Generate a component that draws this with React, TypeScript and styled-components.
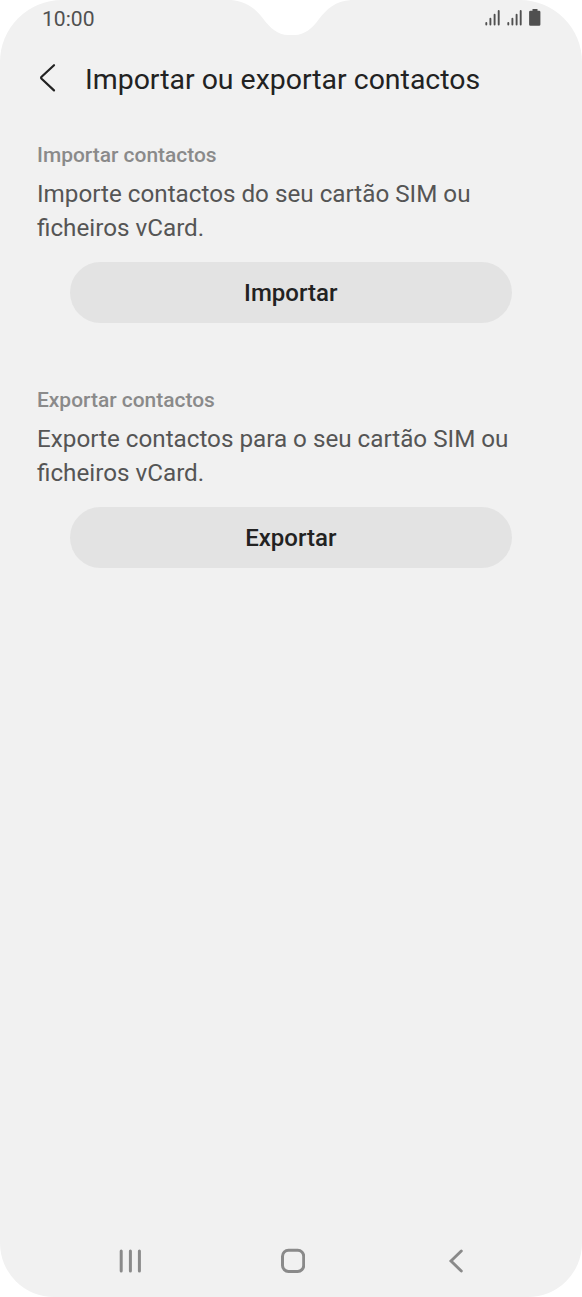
import React from "react";
import styled, { createGlobalStyle } from "styled-components";

const GlobalStyle = createGlobalStyle`
  * { box-sizing: border-box; }
  body { margin: 0; background: #fff; font-family: Roboto, "Liberation Sans", sans-serif; }
`;

const Phone = styled.main`
  width: 582px;
  height: 1297px;
  display: flex;
  flex-direction: column;
  background: #f1f1f1;
  border-radius: 62px 62px 54px 54px;
  overflow: hidden;
`;

const StatusBar = styled.div`
  display: flex;
  align-items: flex-start;
  height: 36px;
  padding: 0 41px 0 42px;
`;

const Clock = styled.span`
  width: 58px;
  font-size: 21.1px;
  line-height: 37px;
  color: #505050;
`;

const Notch = styled.svg`
  display: block;
  margin-left: 71px;
`;

const StatusIcons = styled.svg`
  display: block;
  margin-left: auto;
`;

const Header = styled.header`
  display: flex;
  align-items: center;
  height: 86px;
  padding-left: 38px;
  gap: 27px;
`;

const BackButton = styled.button`
  display: flex;
  padding: 0 0 2px;
  border: 0;
  background: none;
`;

const Title = styled.h1`
  margin: 0;
  padding-top: 1px;
  font-size: 28.45px;
  font-weight: 400;
  line-height: 37px;
  color: #222;
`;

const Content = styled.div`
  display: flex;
  flex-direction: column;
  flex: 1;
  gap: 65px;
  padding: 21px 37px 0;
`;

const Section = styled.section`
  display: flex;
  flex-direction: column;
  height: 180px;
`;

const SectionTitle = styled.h2`
  margin: 0 0 9.5px;
  font-size: 20.95px;
  font-weight: 500;
  line-height: 24px;
  color: #8a8a8a;
`;

const Description = styled.p`
  margin: 0 0 16.5px;
  font-size: 24.23px;
  line-height: 34.5px;
  color: #555;
  white-space: pre-line;
`;

const ActionButton = styled.button`
  width: 442.5px;
  height: 60.5px;
  flex-shrink: 0;
  margin-left: 32.5px;
  padding: 1px 0 0;
  border: 0;
  border-radius: 31px;
  background: #e3e3e3;
  font-family: inherit;
  font-size: 24px;
  font-weight: 500;
  color: #222;
`;

const NavBar = styled.nav`
  display: flex;
  justify-content: space-between;
  align-items: center;
  height: 72px;
  padding: 0 116px;
`;

const sections = [
  {
    title: "Importar contactos",
    text: "Importe contactos do seu cartão SIM ou\nficheiros vCard.",
    action: "Importar",
  },
  {
    title: "Exportar contactos",
    text: "Exporte contactos para o seu cartão SIM ou\nficheiros vCard.",
    action: "Exportar",
  },
];

const SignalBars = ({ x }: { x: number }) => (
  <g transform={`translate(${x} 0)`} stroke="#505050" strokeWidth="1.9" strokeLinecap="round">
    <path d="M1.3 23v1.6M5.4 18.7v5.9M9.6 14.7v9.9M13.7 11v13.6" />
  </g>
);

export default function App() {
  return (
    <>
      <GlobalStyle />
      <Phone>
        <StatusBar>
          <Clock>10:00</Clock>
          <Notch width="240" height="36" viewBox="171 0 240 36">
            <path
              d="M231 0C246 1 256 9 263 18.500C270 28 278 35 288 35H295C304 35 313 28 319 19C327 9 335 1 351 0Z"
              fill="#fff"
            />
          </Notch>
          <StatusIcons width="56" height="36" viewBox="0 0 56 36">
            <SignalBars x={0} />
            <SignalBars x={22} />
            <path
              d="M47.5 9h5v1.8h1.6q1.3 0 1.3 1.3v12.3q0 1.3-1.3 1.3h-8.7q-1.3 0-1.3-1.3V12.1q0-1.3 1.3-1.3h2.1z"
              fill="#505050"
            />
          </StatusIcons>
        </StatusBar>
        <Header>
          <BackButton aria-label="Voltar">
            <svg width="20" height="32" viewBox="0 0 20 32" fill="none">
              <path
                d="M16 3.2L3.6 14.8Q2.6 15.8 3.6 16.8L16 28.4"
                stroke="#222"
                strokeWidth="2.2"
                strokeLinecap="round"
                strokeLinejoin="round"
              />
            </svg>
          </BackButton>
          <Title>Importar ou exportar contactos</Title>
        </Header>
        <Content>
          {sections.map((s) => (
            <Section key={s.title}>
              <SectionTitle>{s.title}</SectionTitle>
              <Description>{s.text}</Description>
              <ActionButton>{s.action}</ActionButton>
            </Section>
          ))}
        </Content>
        <NavBar>
          <svg width="28" height="28" viewBox="0 0 28 28">
            <path d="M5.2 4v20M14.4 4v20M23.4 4v20" stroke="#8a8a8a" strokeWidth="3" strokeLinecap="round" />
          </svg>
          <svg width="28" height="28" viewBox="0 0 28 28" fill="none">
            <rect x="5.5" y="3.2" width="21.2" height="21.2" rx="6" stroke="#8a8a8a" strokeWidth="3" />
          </svg>
          <svg width="28" height="28" viewBox="0 0 28 28" fill="none">
            <path d="M23.3 4L13 14L23.3 24" stroke="#8a8a8a" strokeWidth="2.9" strokeLinecap="round" />
          </svg>
        </NavBar>
      </Phone>
    </>
  );
}
